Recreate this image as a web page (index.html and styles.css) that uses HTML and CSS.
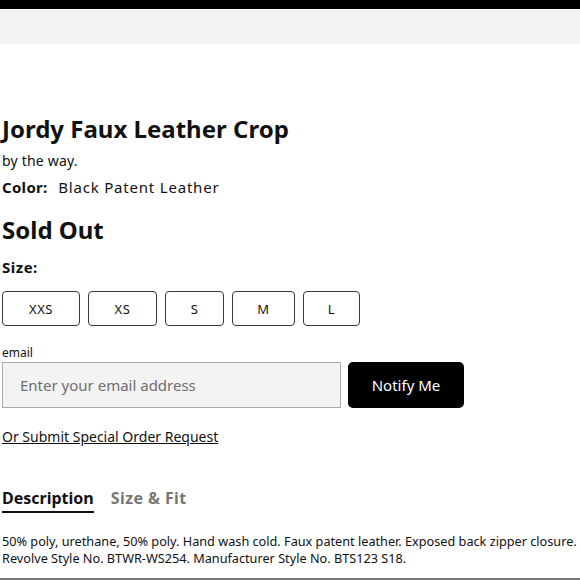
FILE: index.html
```html
<!DOCTYPE html>
<html>
<head>
<meta charset="utf-8">
<link rel="stylesheet" href="styles.css">
</head>
<body>
<div class="topbar"></div>
<div class="subbar"></div>
<main class="product">
  <h1 class="title">Jordy Faux Leather Crop</h1>
  <div class="brand">by the way.</div>
  <div class="color"><span class="label">Color:</span> Black Patent Leather</div>
  <h2 class="status">Sold Out</h2>
  <div class="size-label">Size:</div>
  <div class="sizes">
    <button class="size w-xxs">XXS</button>
    <button class="size w-xs">XS</button>
    <button class="size w-s">S</button>
    <button class="size w-m">M</button>
    <button class="size w-l">L</button>
  </div>
  <label class="email-label">email</label>
  <div class="notify">
    <input class="email" type="text" placeholder="Enter your email address">
    <button class="notify-btn">Notify Me</button>
  </div>
  <a class="special" href="#">Or Submit Special Order Request</a>
  <div class="tabs">
    <span class="tab active">Description</span>
    <span class="tab">Size &amp; Fit</span>
  </div>
  <p class="desc">50% poly, urethane, 50% poly. Hand wash cold. Faux patent leather. Exposed back zipper closure.<br>Revolve Style No. BTWR-WS254. Manufacturer Style No. BTS123 S18.</p>
</main>
<div class="bottomline"></div>
</body>
</html>
```
FILE: styles.css
```css
* { box-sizing: border-box; }
html, body { margin: 0; padding: 0; background: #fff; }
body { font-family: "Noto Sans", sans-serif; color: #111; width: 580px; height: 580px; overflow: hidden; position: relative; }
.topbar { height: 9px; background: #000; }
.subbar { height: 34px; margin-top: 1px; background: #f3f3f3; }
.product { padding: 0 0 0 2px; }
.title { font-size: 24px; font-weight: 700; margin: 70px 0 0; line-height: 30px; letter-spacing: 0; }
.brand { font-size: 14px; margin-top: 8px; line-height: 18px; letter-spacing: 0.2px; }
.color { font-size: 15px; margin-top: 7px; line-height: 20px; letter-spacing: 0.8px; }
.label { font-weight: 700; margin-right: 6px; letter-spacing: 0.3px; }
.status { font-size: 24px; font-weight: 700; margin: 18px 0 0; line-height: 30px; }
.size-label { font-size: 15px; font-weight: 700; margin-top: 12px; line-height: 20px; letter-spacing: 0.5px; }
.sizes { display: flex; gap: 8px; margin-top: 14px; }
.size { height: 35px; border: 1.5px solid #3a3a3a; border-radius: 4px; background: #fff; font-family: inherit; font-size: 13px; color: #111; padding: 0; letter-spacing: 0.5px; }
.w-xxs { width: 78px; }
.w-xs { width: 69px; }
.w-s { width: 59px; }
.w-m { width: 63px; }
.w-l { width: 57px; }
.email-label { display: block; font-size: 12px; margin-top: 19px; line-height: 16px; }
.notify { display: flex; gap: 7px; margin-top: 1px; }
.email { width: 339px; height: 46px; border: 1.5px solid #aaa; background: #f3f3f3; padding: 0 0 0 17px; font-family: inherit; font-size: 15px; color: #111; outline: none; }
.email::placeholder { color: #6f6f6f; }
.notify-btn { width: 116px; height: 46px; background: #000; color: #fff; border: none; border-radius: 5px; font-family: inherit; font-size: 15px; }
.special { display: inline-block; margin-top: 20px; font-size: 14px; color: #111; text-decoration: underline; line-height: 18px; }
.tabs { display: flex; gap: 17px; margin-top: 41px; }
.tab { font-size: 16px; font-weight: 700; color: #777; padding-bottom: 3px; line-height: 20px; letter-spacing: 0.4px; }
.tab.active { color: #111; border-bottom: 2px solid #111; letter-spacing: 0; }
.desc { font-size: 12.7px; line-height: 17px; margin: 20px 0 0; letter-spacing: 0; white-space: nowrap; }
.bottomline { position: absolute; left: 0; right: 0; top: 578px; height: 2px; background: #777; }
```
